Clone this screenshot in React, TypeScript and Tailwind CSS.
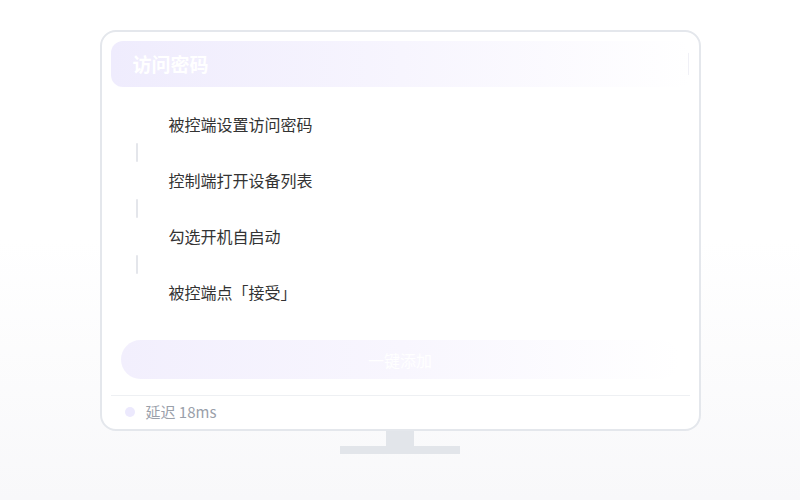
const steps = ["被控端设置访问密码", "控制端打开设备列表", "勾选开机自启动", "被控端点「接受」"]

export default function App() {
  return (
    <div
      className="flex h-[500px] w-[800px] flex-col items-center bg-gradient-to-b from-white from-[48%] to-[#f8f8fa] pt-[30px]"
      style={{ fontFamily: '"Noto Sans CJK SC", "Noto Sans", sans-serif' }}
    >
      <div className="flex h-[401px] w-[601px] flex-col rounded-[16px] border-2 border-[#e4e7ec] bg-white px-[9px] pt-[9px]">
        <div className="flex h-[46px] items-center justify-between rounded-[12px] bg-gradient-to-r from-[#efecfd] via-[#f7f5fe] to-white pl-[22px] pr-[1px]">
          <span className="text-[19px] font-bold text-white">访问密码</span>
          <span className="h-[22px] w-[1px] bg-[#f0f0f6]" />
        </div>

        <div className="flex flex-col pl-[25px] pt-[25px]">
          {steps.map((s, i) => (
            <div key={s} className="flex flex-col">
              <div className="flex h-6 items-center pl-[33px] text-[16px] text-[#333333]">{s}</div>
              {i < steps.length - 1 && (
                <div className="flex h-8 items-center">
                  <span className="h-[19px] w-[2px] rounded-full bg-[#e4e6eb]" />
                </div>
              )}
            </div>
          ))}
        </div>

        <div className="mx-[10px] mt-[36px] flex h-[39px] items-center justify-center rounded-full bg-gradient-to-r from-[#f2effd] via-[#f8f6fe] to-white text-[16px] text-white">
          一键添加
        </div>

        <div className="mt-[16px] border-t border-[#eef0f3]" />
        <div className="flex h-[32px] items-center gap-[11px] pl-[14px]">
          <span className="h-[10px] w-[10px] rounded-full bg-[#ece9fd]" />
          <span className="text-[15px] text-[#9aa0aa]">延迟 18ms</span>
        </div>
      </div>
      <div className="h-[15px] w-[28px] bg-[#e2e5ea]" />
      <div className="h-[8px] w-[120px] bg-[#e2e5ea]" />
    </div>
  )
}
